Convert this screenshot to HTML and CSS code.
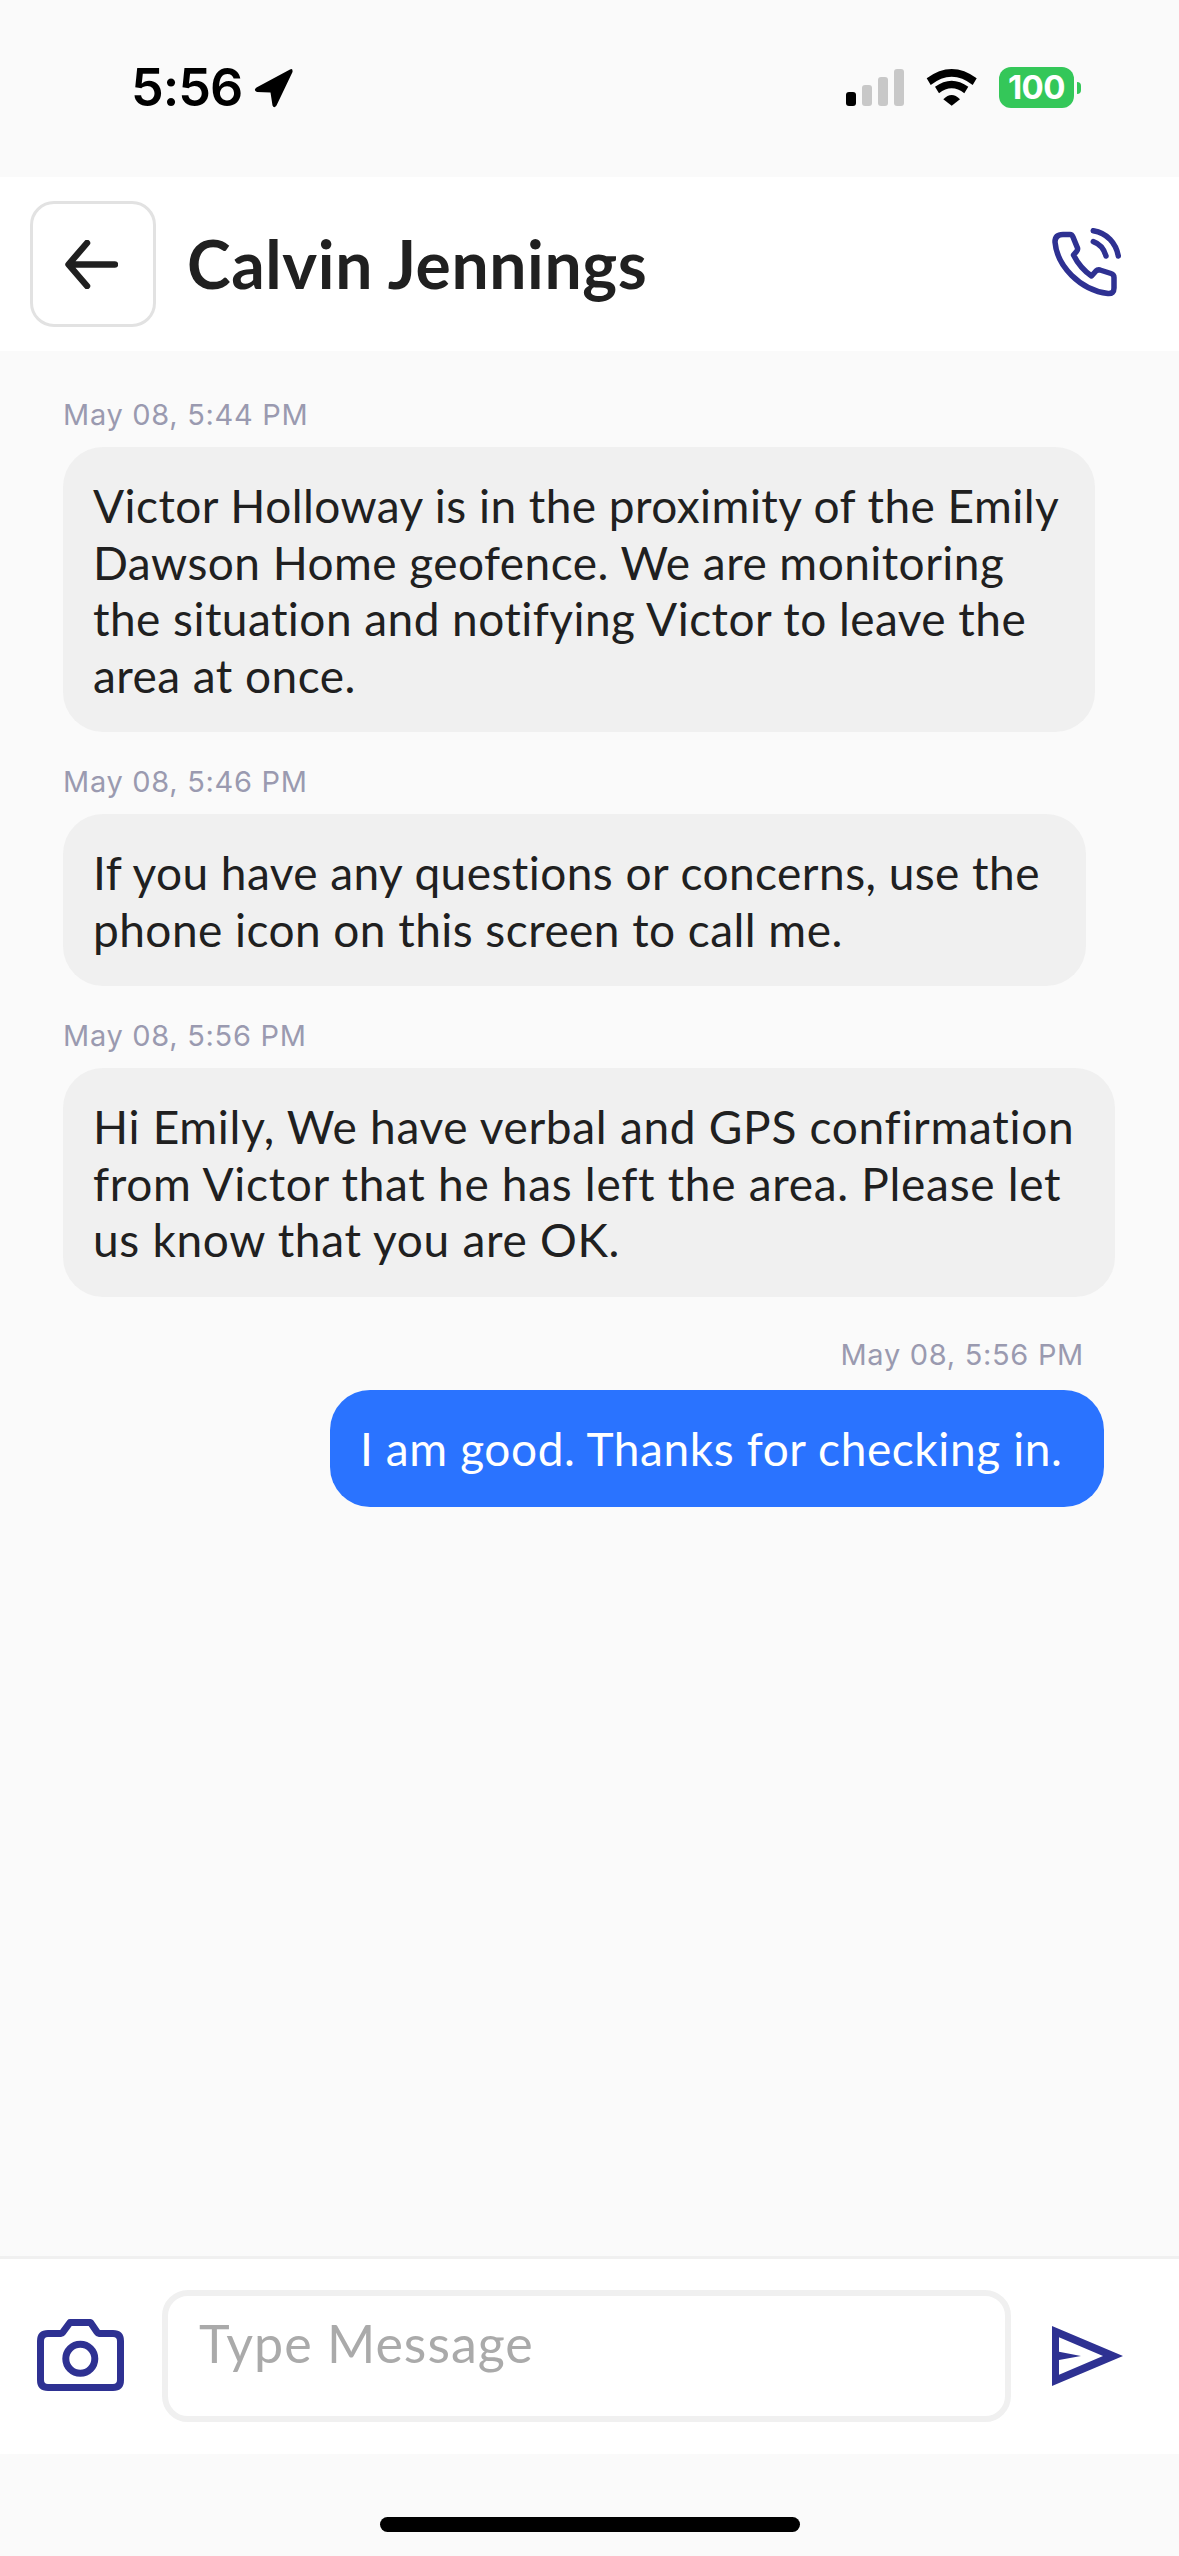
FILE: index.html
```html
<!DOCTYPE html>
<html lang="en">
<head>
    <meta charset="UTF-8">
    <meta name="viewport" content="width=device-width, initial-scale=1.0">
    <title>Calvin Jennings</title>
    <link rel="stylesheet" href="styles.css">
</head>
<body>
    <div class="status-bar">
        <div class="status-time">
            <span>5:56</span>
            <svg class="location-icon" viewBox="0 0 39 39"><path d="M36 .5 2.5 18.5Q-1 21 3 23L16.500 23.500 18.500 36.500Q20 40 22.500 36.500L38.500 3Q39 -1 36 .5Z"/></svg>
        </div>
        <div class="status-icons">
            <div class="signal">
                <span class="bar bar-1"></span>
                <span class="bar bar-2"></span>
                <span class="bar bar-3"></span>
                <span class="bar bar-4"></span>
            </div>
            <svg class="wifi-icon" viewBox="0 0 51 37"><path d="M.7 9.300Q25.700 -9.300 50.700 9.300L46.700 16Q25.700 -.6 4.700 16Z"/><path d="M9 17.700Q25.700 5.700 42.300 17.700L38.300 24.300Q25.700 14.300 13 24.300Z"/><path d="M17.300 30.300Q25.700 21.700 34 30.300L25.700 36.700Z"/></svg>
            <div class="battery">
                <div class="battery-body">100</div>
                <div class="battery-nub"></div>
            </div>
        </div>
    </div>

    <div class="header">
        <div class="back-button">
            <svg class="back-icon" viewBox="0 0 53 49"><path d="M50 24.500H4M22 3 3.500 24.500 22 46"/></svg>
        </div>
        <h1 class="contact-name">Calvin Jennings</h1>
        <svg class="phone-icon" viewBox="0 0 70 70"><path d="M11 6.500H18Q20 6.500 21 9L25.500 20Q26 22 24.500 23.500L21.500 27Q28 40 39.500 48L44 43Q45.500 41.500 48 42L59 45.500Q62 46.500 62 49.500V60Q62 66 56 65.500C28 62 5 38 3 14Q3 6.500 11 6.500Z"/><path d="M41.300 2.700C55 5 64 15 66.300 28"/><path d="M41.300 13.700C48 16 52 21 54 28"/></svg>
    </div>

    <div class="messages">
        <div class="message">
            <div class="timestamp">May 08, 5:44 PM</div>
            <div class="bubble bubble-in bubble-alert">Victor Holloway is in the proximity of the Emily<br>Dawson Home geofence. We are monitoring<br>the situation and notifying Victor to leave the<br>area at once.</div>
        </div>
        <div class="message">
            <div class="timestamp">May 08, 5:46 PM</div>
            <div class="bubble bubble-in bubble-help">If you have any questions or concerns, use the<br>phone icon on this screen to call me.</div>
        </div>
        <div class="message">
            <div class="timestamp">May 08, 5:56 PM</div>
            <div class="bubble bubble-in bubble-confirm">Hi Emily, We have verbal and GPS confirmation<br>from Victor that he has left the area. Please let<br>us know that you are OK.</div>
        </div>
        <div class="message message-out">
            <div class="timestamp">May 08, 5:56 PM</div>
            <div class="bubble bubble-out">I am good. Thanks for checking in.</div>
        </div>
    </div>

    <div class="composer">
        <svg class="camera-icon" viewBox="0 0 87 72"><path d="M11 14.500H24Q25 14.500 26 13L33 3.500H53.500L60 13Q61 14.500 62 14.500H76Q83.500 14.500 83.500 22V61Q83.500 68.500 76 68.500H11Q3.500 68.500 3.500 61V22Q3.500 14.500 11 14.500Z"/><circle cx="43.300" cy="39.700" r="14.500"/></svg>
        <div class="message-input">Type Message</div>
        <svg class="send-icon" viewBox="0 0 71 60"><path fill-rule="evenodd" d="M0 0 71 30 0 60ZM7 11.300V25.700L29 30 7 34V48.700L51 30Z"/></svg>
    </div>

    <div class="home-area">
        <div class="home-indicator"></div>
    </div>
</body>
</html>
```

FILE: styles.css
```css
body {
    font-family: "Lato", "Open Sans", sans-serif;
    background-color: #fafafa;
    color: #202020;
    margin: 0;
    padding: 0;
    width: 1179px;
    height: 2556px;
    display: flex;
    flex-direction: column;
    overflow: hidden;
}

/* status bar */
.status-bar {
    height: 177px;
    flex-shrink: 0;
    box-sizing: border-box;
    padding: 67px 98px 0 131px;
    display: flex;
    justify-content: space-between;
    align-items: flex-start;
}
.status-time {
    display: flex;
    align-items: center;
    gap: 12px;
    font-family: "Inter", sans-serif;
    font-weight: 600;
    font-size: 52px;
    line-height: 42px;
    letter-spacing: -1px;
    color: #000;
}
.location-icon {
    width: 39px;
    height: 39px;
    fill: #000;
}
.status-icons {
    display: flex;
    align-items: center;
    height: 41px;
}
.signal {
    display: flex;
    align-items: flex-end;
    gap: 6px;
    height: 37px;
    margin-right: 22px;
}
.bar {
    width: 10px;
    border-radius: 3px;
    background-color: #c8c8c8;
}
.bar-1 {
    height: 14px;
    background-color: #000;
}
.bar-2 {
    height: 21px;
}
.bar-3 {
    height: 29px;
}
.bar-4 {
    height: 37px;
}
.wifi-icon {
    width: 51px;
    height: 37px;
    fill: #000;
    margin-right: 22px;
}
.battery {
    display: flex;
    align-items: center;
    gap: 3px;
}
.battery-body {
    width: 75px;
    height: 41px;
    border-radius: 12px;
    background-color: #34c759;
    color: #fff;
    font-family: "Inter", sans-serif;
    font-weight: 700;
    font-size: 33px;
    line-height: 41px;
    text-align: center;
    letter-spacing: -.5px;
}
.battery-nub {
    width: 4px;
    height: 12px;
    border-radius: 0 4px 4px 0;
    background-color: #34c759;
}

/* header */
.header {
    height: 174px;
    flex-shrink: 0;
    box-sizing: border-box;
    background-color: #fff;
    padding: 24px 57px 0 30px;
    display: flex;
    align-items: flex-start;
}
.back-button {
    width: 126px;
    height: 126px;
    box-sizing: border-box;
    border: 3px solid #e2e2e2;
    border-radius: 24px;
    padding-right: 3px;
    display: flex;
    align-items: center;
    justify-content: center;
}
.back-icon {
    width: 53px;
    height: 49px;
    fill: none;
    stroke: #202020;
    stroke-width: 6.500;
    stroke-linecap: round;
    stroke-linejoin: round;
}
.contact-name {
    margin: 0 0 0 31px;
    flex: 1;
    font-size: 66px;
    font-weight: 700;
    line-height: 126px;
    letter-spacing: .6px;
}
.phone-icon {
    width: 70px;
    height: 70px;
    margin-top: 27px;
    fill: none;
    stroke: #2e3192;
    stroke-width: 5.500;
    stroke-linecap: round;
    stroke-linejoin: round;
}

/* messages */
.messages {
    flex: 1;
    padding: 46px 0 0 63px;
    display: flex;
    flex-direction: column;
    gap: 32px;
}
.message {
    display: flex;
    flex-direction: column;
    align-items: flex-start;
}
.message-out {
    align-items: flex-end;
    margin-top: 8px;
    padding-right: 75px;
}
.timestamp {
    font-family: "Inter", sans-serif;
    font-size: 29px;
    line-height: 35px;
    letter-spacing: .7px;
    color: #9a9ab0;
    margin-bottom: 15px;
}
.message-out .timestamp {
    margin-right: 20px;
    margin-bottom: 18px;
}
.bubble {
    box-sizing: border-box;
    padding: 31px 30px 28px;
    border-radius: 40px;
    font-size: 46px;
    line-height: 56.500px;
    letter-spacing: .45px;
    white-space: nowrap;
}
.bubble-in {
    background-color: #f0f0f0;
}
.bubble-alert {
    width: 1032px;
}
.bubble-help {
    width: 1023px;
}
.bubble-confirm {
    width: 1052px;
    letter-spacing: .7px;
}
.bubble-out {
    width: 774px;
    padding-bottom: 30px;
    background-color: #2a73ff;
    color: #fff;
    letter-spacing: .6px;
}

/* composer */
.composer {
    height: 198px;
    flex-shrink: 0;
    box-sizing: border-box;
    background-color: #fff;
    border-top: 3px solid #f0f0f0;
    padding: 31px 56px 0 37px;
    display: flex;
    align-items: flex-start;
}
.camera-icon {
    width: 87px;
    height: 72px;
    margin-top: 29px;
    fill: none;
    stroke: #2e3192;
    stroke-width: 7;
    stroke-linejoin: round;
}
.message-input {
    width: 849px;
    height: 132px;
    box-sizing: border-box;
    margin-left: 38px;
    border: 6px solid #f0f0f0;
    border-radius: 26px;
    padding: 17px 31px;
    font-size: 52px;
    line-height: 60px;
    letter-spacing: 1px;
    color: #aaa;
}
.send-icon {
    width: 71px;
    height: 60px;
    margin: 36px 0 0 41px;
    fill: #2e3192;
}

/* home indicator */
.home-area {
    height: 102px;
    flex-shrink: 0;
    display: flex;
    justify-content: center;
}
.home-indicator {
    width: 420px;
    height: 15px;
    margin-top: 63px;
    border-radius: 8px;
    background-color: #000;
}
```
